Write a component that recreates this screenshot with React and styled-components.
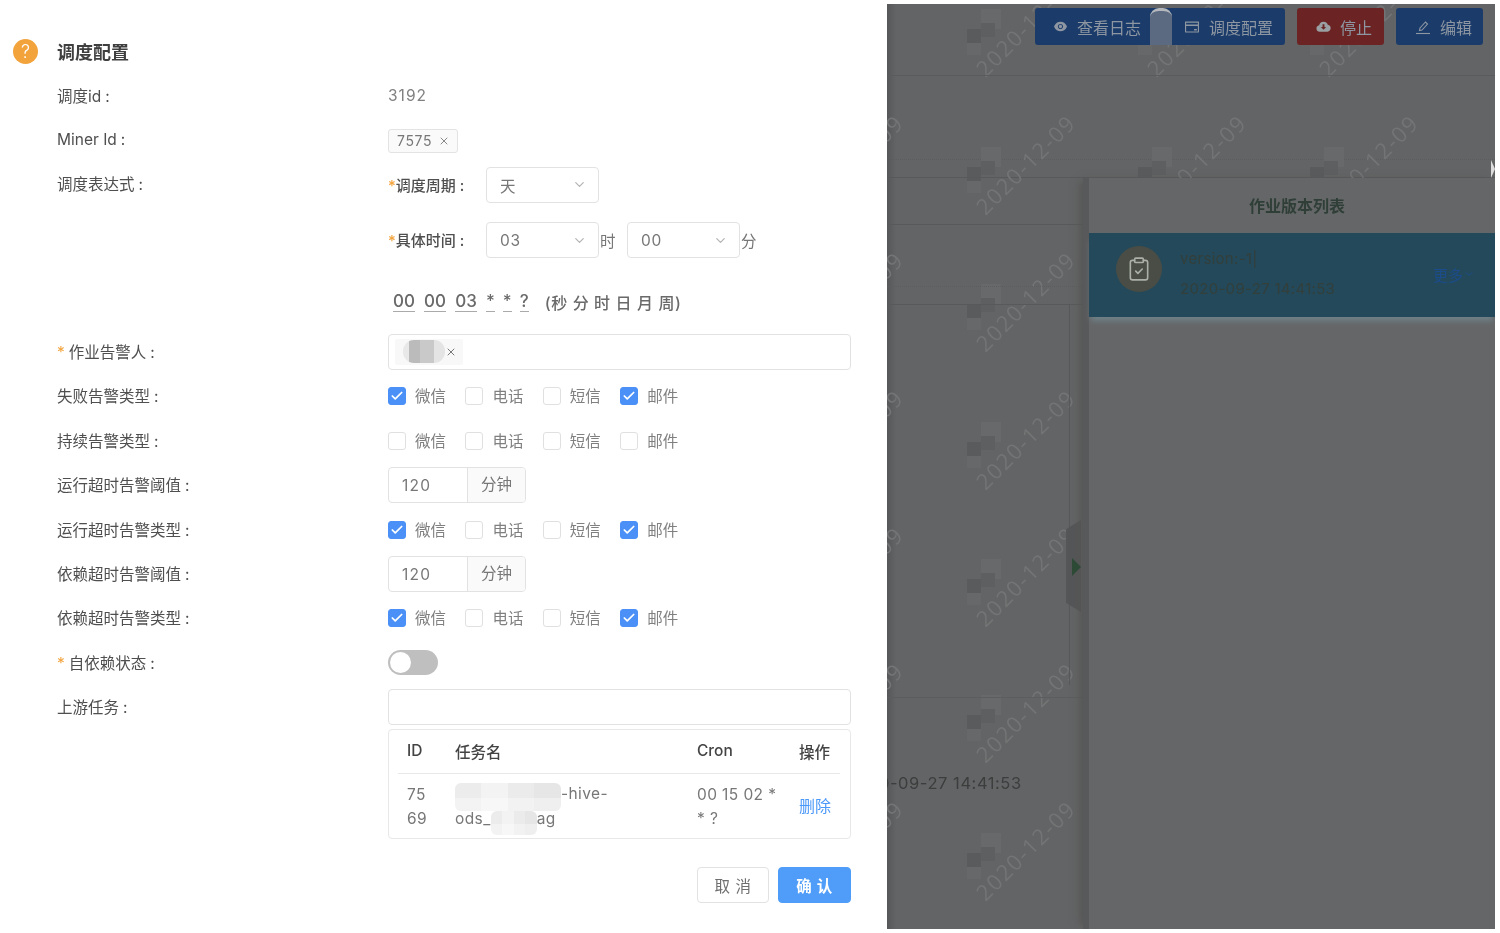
import React from 'react';
import styled, { createGlobalStyle } from 'styled-components';
import { AiFillEye, AiOutlineCreditCard } from 'react-icons/ai';
import { ClipboardCheck, ChevronDown, X, Check } from 'lucide-react';

const Global = createGlobalStyle`
  html, body { margin: 0; padding: 0; background: #fff; }
  body { font-family: Inter, "Liberation Sans", "Noto Sans CJK SC", sans-serif; }
  * { box-sizing: border-box; }
`;

const Page = styled.div`
  width: 1500px; height: 933px; display: flex; overflow: hidden; background: #fff; filter: blur(0.35px);
`;
const Drawer = styled.div`
  width: 887px; flex: none; padding-top: 30px; color: #666; font-size: 15.5px;
`;
const Header = styled.div`
  height: 44px; display: flex; align-items: center; padding-left: 13px; gap: 19px;
`;
const HelpIcon = styled.span`
  width: 25px; height: 25px; border-radius: 50%; background: #f2a33c; color: #fff; font-size: 18px; line-height: 25px;
  text-align: center; font-weight: 300; margin-top: -2px;
`;
const Title = styled.h2`
  margin: 2px 0 0; font-size: 18px; line-height: 24px; color: #3f3f3f; font-weight: 600;
`;
const Form = styled.div`
  padding-left: 57px; display: flex; flex-direction: column;
`;
const Row = styled.div`
  display: grid; grid-template-columns: 331px 463px; min-height: 44.4px; align-items: center;
`;
const TopRow = styled(Row)`
  align-items: start;
`;
const Label = styled.label`
  font-size: 15.5px; color: #4f4f4f; margin-bottom: 2px;
  &::after { content: ':'; margin-left: 4px; }
`;
const TopLabel = styled(Label)`
  line-height: 44.4px;
`;
const Star = styled.span`
  color: #f2a33c; margin-right: ${p => p.$gap}px;
`;
const Value = styled.span`
  color: #808080; letter-spacing: 1px; margin-bottom: 2px;
`;
const Tag = styled.span`
  display: inline-flex; align-items: center; justify-content: space-between; height: 24px; width: 70px; padding: 0 7px 0 8px;
  background: #fafafa; border: 1px solid #e3e3e3; border-radius: 3px; color: #777; font-size: 14px; letter-spacing: 0.6px;
  vertical-align: middle; svg { color: #888; }
`;
const Stack = styled.div`
  display: flex; flex-direction: column;
`;
const SubRow = styled.div`
  height: 44.4px; display: flex; align-items: center; margin-top: ${p => p.$top || 0}px;
`;
const SubLabel = styled.span`
  width: 98px; flex: none; color: #4f4f4f; font-weight: 500; font-size: 15px; white-space: nowrap; margin-top: -1px;
`;
const Select = styled.div`
  width: 113px; height: 36px; display: flex; align-items: center; justify-content: space-between; padding: 0 11px 0 13px;
  border: 1px solid #e2e2e2; border-radius: 4px; color: #777; font-size: 15.5px; letter-spacing: 0.8px; svg { color: #b5b5b5; }
`;
const Unit = styled.span`
  color: #777; font-size: 15.5px; width: ${p => p.$w}px; padding-left: 1px; flex: none; margin-top: -1px;
`;
const CronLine = styled.div`
  height: 67.2px; padding: 12px 0 0 5px; display: flex; align-items: center; font-size: 17px; font-weight: 500; color: #6a6a6a;
`;
const CronField = styled.span`
  border-bottom: 1px solid #aaa; margin-right: ${p => p.$gap}px; line-height: 19px; min-width: ${p => p.$w}px; text-align: center;
`;
const CronHint = styled.span`
  margin-left: 16px; font-size: 16px; letter-spacing: 0.6px; white-space: nowrap;
`;
const Field = styled.div`
  height: 36px; width: 463px; border: 1px solid #e2e2e2; border-radius: 4px; padding: 4px 6px; display: flex; align-items: center;
`;
const UserTag = styled.span`
  width: 68px; height: 26px; background: #f8f8f8; display: flex; align-items: center; position: relative; padding-left: 50px;
  border-radius: 2px; color: #777;
`;
const UserBlur = styled.span`
  position: absolute; left: 8px; top: 1px; width: 42px; height: 23px; border-radius: 11px;
  background: linear-gradient(90deg, #e8e8e8 0 14%, #bbb 14% 40%, #c9c9c9 40% 75%, #e4e4e4 75%);
`;
const Checks = styled.div`
  display: flex;
`;
const CheckItem = styled.span`
  width: 77.4px; display: flex; align-items: center; gap: 9px; color: #808080; font-size: 15.5px; span + & { }
`;
const CheckText = styled.span`
  margin-top: -2px;
`;
const Box = styled.span`
  width: 18px; height: 18px; border-radius: 3px; display: flex; align-items: center; justify-content: center; color: #fff;
  background: ${p => p.$on ? '#4a90f6' : '#fff'}; border: 1px solid ${p => p.$on ? '#4a90f6' : '#e0e0e0'};
`;
const Group = styled.div`
  width: 138px; height: 36px; display: flex; border: 1px solid #e2e2e2; border-radius: 4px; overflow: hidden;
`;
const GroupInput = styled.span`
  width: 79px; line-height: 36px; padding-left: 13px; color: #777; letter-spacing: 1.3px; border-right: 1px solid #e2e2e2;
`;
const Addon = styled.span`
  flex: 1; background: #fafafa; color: #777; text-align: center; line-height: 33px;
`;
const Switch = styled.span`
  width: 50px; height: 25px; border-radius: 13px; background: #bfbfbf; padding: 2px; display: block;
  &::before { content: ''; display: block; width: 21px; height: 21px; border-radius: 50%; background: #fff; }
`;
const Offset = styled.div`
  padding-left: 331px;
`;
const TableCard = styled.div`
  width: 463px; height: 110px; border: 1px solid #e8e8e8; border-radius: 4px; padding: 0 10px 0 9px;
`;
const Table = styled.table`
  width: 100%; border-collapse: collapse; table-layout: fixed; font-size: 15.5px;
`;
const Th = styled.th`
  height: 43px; border-bottom: 1px solid #e8e8e8; text-align: left; padding: 0 9px 2px; color: #444; font-weight: 500; width: ${p => p.$w}px;
`;
const Td = styled.td`
  height: 66px; padding: 0 9px; color: #777; line-height: 24px; letter-spacing: 0.4px;
`;
const Mosaic = styled.span`
  display: inline-block; width: ${p => p.$w}px; height: ${p => p.$h}px; margin: -4px 0; vertical-align: ${p => p.$shift}px; border-radius: 6px;
  background:
    linear-gradient(180deg, transparent 55%, rgba(255,255,255,.35) 55%),
    linear-gradient(90deg, #ececec 0 25%, #f3f3f3 25% 50%, #ebebeb 50% 75%, #e6e6e6 75%);
`;
const DeleteLink = styled.span`
  color: #4a98f8; white-space: nowrap; letter-spacing: 0; font-size: 16px;
`;
const Footer = styled.div`
  padding-left: 640px; margin-top: 28px; display: flex; gap: 9px;
`;
const Button = styled.button`
  width: ${p => p.$w}px; height: 36px; border-radius: 4px; font: inherit; font-size: 15.5px; letter-spacing: 0.5px; padding: 0;
  border: 1px solid ${p => p.$primary ? '#4f9df8' : '#e2e2e2'}; color: ${p => p.$primary ? '#fff' : '#6f6f6f'};
  background: ${p => p.$primary ? '#4f9df8' : '#fff'}; font-weight: ${p => p.$primary ? 600 : 400};
`;

/* right, dimmed page behind the drawer */
const Backdrop = styled.div`
  width: 608px; height: 925px; margin-top: 4px; background: #636465; position: relative; overflow: hidden;
  display: flex; flex-direction: column; flex: none;
  &::before { content: ''; position: absolute; left: 0; top: 0; bottom: 0; width: 9px; background: linear-gradient(90deg, #565758, transparent); }
`;
const Toolbar = styled.div`
  height: 72px; flex: none; padding: 4px 12px 0 0; display: flex; justify-content: flex-end; align-items: flex-start; gap: 12px;
  border-bottom: 1px solid #5a5b5c; position: relative; z-index: 2;
`;
const ToolGroup = styled.div`
  display: flex; position: relative;
`;
const ToolBtn = styled.span`
  height: 37px; width: ${p => p.$w}px; display: flex; align-items: center; gap: 9px; padding-left: ${p => p.$pad}px;
  background: ${p => p.$red ? '#6b2423' : '#1b3c6b'}; color: #8d96a1; font-size: 16px; white-space: nowrap;
  border-radius: ${p => p.$r || '3px'};
  svg { flex: none; }
`;
const Pixel = styled.span`
  position: absolute; left: 115px; top: 0; width: 22px; height: 37px; background: #5b6a80; border-radius: 9px 9px 0 0;
  border-top: 3px solid #b4b8bd;
`;
const FaintRule = styled.div`
  height: ${p => p.$h}px; flex: none; border-bottom: 1px ${p => p.$solid ? 'solid #58595a' : 'dotted #5c5d5e'};
`;
const Lower = styled.div`
  flex: 1; display: flex; min-height: 0; position: relative;
`;
const Main = styled.div`
  width: 196px; flex: none; display: flex; flex-direction: column; position: relative;
`;
const Inner = styled.div`
  width: 183px; height: 380px; border-right: 1px solid #585959; flex: none;
`;
const WideRule = styled.div`
  height: 1px; background: #5c5d5e; flex: none; margin-top: 12px;
`;
const DateText = styled.div`
  margin-top: 75px; color: #3c3e3e; font-size: 16.5px; white-space: nowrap; letter-spacing: 0.55px; margin-left: -8px; position: relative; z-index: 1;
`;
const Collapse = styled.div`
  position: absolute; left: 179px; top: 342px; width: 15px; height: 92px; background: #555657; z-index: 1;
  clip-path: polygon(0 10%, 100% 0, 100% 100%, 0 90%);
`;
const Arrow = styled.span`
  position: absolute; left: 185px; top: 380px; z-index: 2; border-left: 9px solid #2d4a37; border-top: 9px solid transparent; border-bottom: 9px solid transparent;
`;
const VersionPanel = styled.div`
  flex: 1; background: #656667; border-left: 6px solid #58595a; position: relative; z-index: 1; box-shadow: -6px 0 8px -3px #555;
`;
const VersionTitle = styled.div`
  height: 55px; line-height: 56px; text-align: center; color: #2f3f38; font-weight: 600; font-size: 16px; padding-left: 10px;
`;
const VersionCard = styled.div`
  height: 84px; background: #23495a; display: flex; align-items: center; padding: 0 20px 0 27px; box-shadow: 0 6px 6px -2px #6f8289;
`;
const Avatar = styled.span`
  width: 46px; height: 46px; border-radius: 50%; background: #4a4d45; color: #aab0a8; display: flex; align-items: center; justify-content: center; flex: none; margin-top: -12px;
`;
const VersionMeta = styled.div`
  margin: -2px 0 0 18px; flex: 1; color: #333f3b; font-size: 15px; line-height: 30px; letter-spacing: 0.3px;
`;
const More = styled.span`
  color: #1c4c8a; font-size: 15px; display: flex; align-items: center; margin-top: -2px;
`;
const Notch = styled.span`
  position: absolute; right: 0; top: 156px; z-index: 3; border-left: 4px solid #ddd; border-top: 9px solid transparent; border-bottom: 9px solid transparent;
`;
const Watermark = styled.div.attrs(p => ({ style: { left: p.$x, top: p.$y } }))`
  position: absolute; width: 0; height: 0; z-index: 0;
`;
const MarkText = styled.span`
  position: absolute; left: -75px; top: -14px; width: 150px; text-align: center; transform: rotate(-45deg); white-space: nowrap;
  color: #737475; font-size: 22px; font-weight: 400; letter-spacing: 1.5px; font-family: "Open Sans", sans-serif;
`;
const MarkBlur = styled.svg`
  position: absolute; left: -58px; top: -16px; opacity: .8;
`;

const ROWS = [21, 159, 296, 434, 571, 707, 845];
const COLS = [-34, 138, 309, 481];

function Checkset({ values }) {
  const names = ['微信', '电话', '短信', '邮件'];
  return (
    <Checks>
      {names.map((n, i) => (
        <CheckItem key={n}>
          <Box $on={values[i]}>{values[i] ? <Check size={14} strokeWidth={3} /> : null}</Box>
          <CheckText>{n}</CheckText>
        </CheckItem>
      ))}
    </Checks>
  );
}
function Minutes() {
  return <Group><GroupInput>120</GroupInput><Addon>分钟</Addon></Group>;
}
function StopIcon() {
  return (
    <svg width="15" height="15" viewBox="0 0 16 16">
      <path fill="#9aa0a3" d="M4 13.5a3.5 3.5 0 0 1-.6-6.95A4.8 4.8 0 0 1 12.6 6a3.8 3.8 0 0 1-.4 7.5z" />
      <path fill="#6b2423" d="M7 5.5h2v3h1.8L8 11.5 5.2 8.5H7z" />
    </svg>
  );
}
function EditIcon() {
  return (
    <svg width="16" height="16" viewBox="0 0 16 16" fill="none" stroke="#8d96a1" strokeWidth="1.1">
      <path d="M1 14.5h14" />
      <path d="M4.5 11.5l.5-2.5 5.5-6 2 2-5.5 6z" />
    </svg>
  );
}

export default function App() {
  return (
    <Page>
      <Global />
      <Drawer>
        <Header><HelpIcon>?</HelpIcon><Title>调度配置</Title></Header>
        <Form>
          <Row><Label>调度id</Label><Value>3192</Value></Row>
          <Row><Label>Miner Id</Label><div><Tag>7575<X size={12} /></Tag></div></Row>
          <TopRow>
            <TopLabel>调度表达式</TopLabel>
            <Stack>
              <SubRow>
                <SubLabel><Star $gap={0}>*</Star>调度周期 :</SubLabel>
                <Select>天<ChevronDown size={15} /></Select>
              </SubRow>
              <SubRow $top={11}>
                <SubLabel><Star $gap={0}>*</Star>具体时间 :</SubLabel>
                <Select>03<ChevronDown size={15} /></Select>
                <Unit $w={28}>时</Unit>
                <Select>00<ChevronDown size={15} /></Select>
                <Unit $w={20}>分</Unit>
              </SubRow>
              <CronLine>
                <CronField $w={22} $gap={9}>00</CronField>
                <CronField $w={22} $gap={9}>00</CronField>
                <CronField $w={22} $gap={9}>03</CronField>
                <CronField $w={8} $gap={8}>*</CronField>
                <CronField $w={8} $gap={8}>*</CronField>
                <CronField $w={8} $gap={0}>?</CronField>
                <CronHint>(秒 分 时 日 月 周)</CronHint>
              </CronLine>
            </Stack>
          </TopRow>
          <Row>
            <Label><Star $gap={4}>*</Star>作业告警人</Label>
            <Field><UserTag><UserBlur /><X size={12} /></UserTag></Field>
          </Row>
          <Row><Label>失败告警类型</Label><Checkset values={[1, 0, 0, 1]} /></Row>
          <Row><Label>持续告警类型</Label><Checkset values={[0, 0, 0, 0]} /></Row>
          <Row><Label>运行超时告警阈值</Label><Minutes /></Row>
          <Row><Label>运行超时告警类型</Label><Checkset values={[1, 0, 0, 1]} /></Row>
          <Row><Label>依赖超时告警阈值</Label><Minutes /></Row>
          <Row><Label>依赖超时告警类型</Label><Checkset values={[1, 0, 0, 1]} /></Row>
          <Row><Label><Star $gap={4}>*</Star>自依赖状态</Label><Switch /></Row>
          <Row><Label>上游任务</Label><Field /></Row>
          <Offset>
            <TableCard>
              <Table>
                <thead>
                  <tr>
                    <Th $w={48}>ID</Th><Th $w={242}>任务名</Th><Th $w={102}>Cron</Th><Th>操作</Th>
                  </tr>
                </thead>
                <tbody>
                  <tr>
                    <Td>75<br />69</Td>
                    <Td><Mosaic $w={106} $h={28} $shift={-8} />-hive-<br />ods_<Mosaic $w={46} $h={24} $shift={-7} />ag</Td>
                    <Td>00 15 02 *<br />* ?</Td>
                    <Td><DeleteLink>删除</DeleteLink></Td>
                  </tr>
                </tbody>
              </Table>
            </TableCard>
          </Offset>
          <Footer>
            <Button $w={72}>取 消</Button>
            <Button $w={73} $primary>确 认</Button>
          </Footer>
        </Form>
      </Drawer>

      <Backdrop>
        {ROWS.map(y => COLS.map(x => (
          <Watermark key={`${x}-${y}`} $x={x} $y={y}>
            <MarkBlur width="40" height="46" viewBox="0 0 40 46">
              <rect x="14" y="0" width="20" height="20" fill="#6a6b6c" />
              <rect x="0" y="20" width="14" height="14" fill="#58595a" />
              <rect x="0" y="34" width="14" height="12" fill="#68696a" />
              <rect x="14" y="14" width="14" height="14" fill="#5d5e5f" />
            </MarkBlur>
            <MarkText>2020-12-09</MarkText>
          </Watermark>
        )))}
        <Notch />
        <Toolbar>
          <ToolGroup>
            <ToolBtn $w={125} $pad={18} $r="3px 0 0 3px"><AiFillEye size={15} />查看日志</ToolBtn>
            <ToolBtn $w={125} $pad={24} $r="0 3px 3px 0"><AiOutlineCreditCard size={16} />调度配置</ToolBtn>
            <Pixel />
          </ToolGroup>
          <ToolBtn $w={87} $pad={19} $red><StopIcon />停止</ToolBtn>
          <ToolBtn $w={87} $pad={19}><EditIcon />编辑</ToolBtn>
        </Toolbar>
        <FaintRule $h={84} />
        <FaintRule $h={18} $solid />
        <Lower>
          <Main>
            <FaintRule $h={47} $solid />
            <FaintRule $h={62} />
            <FaintRule $h={18} $solid />
            <Inner />
            <WideRule />
            <DateText>0-09-27 14:41:53</DateText>
            <Collapse />
            <Arrow />
          </Main>
          <VersionPanel>
            <VersionTitle>作业版本列表</VersionTitle>
            <VersionCard>
              <Avatar><ClipboardCheck size={26} strokeWidth={1.5} /></Avatar>
              <VersionMeta>version:-1|<br />2020-09-27 14:41:53</VersionMeta>
              <More>更多<ChevronDown size={12} /></More>
            </VersionCard>
          </VersionPanel>
        </Lower>
      </Backdrop>
    </Page>
  );
}
